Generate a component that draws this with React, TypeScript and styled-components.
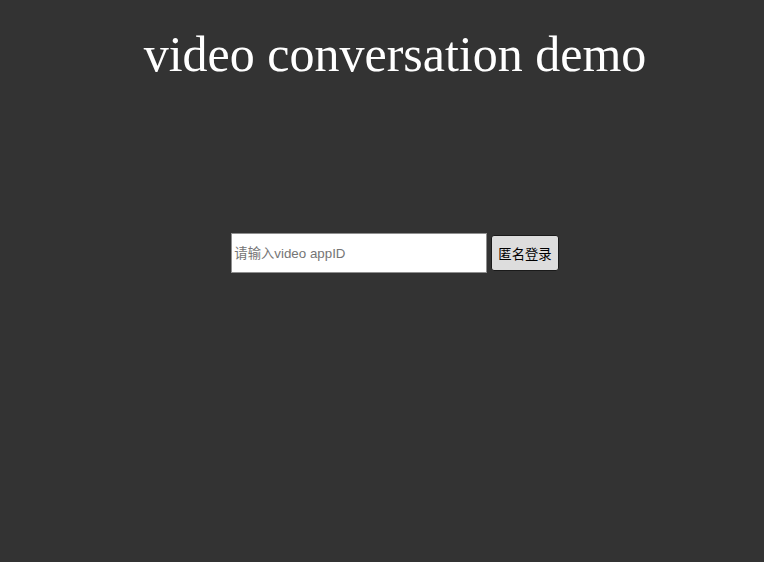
import React from "react";
import styled, { createGlobalStyle } from "styled-components";

const Global = createGlobalStyle`
  html, body { margin: 0; padding: 0; background: #333333; }
  body { min-height: 562px; font-family: "Liberation Serif", "Noto Sans CJK SC", serif; }
`;

const Page = styled.div`
  display: flex;
  flex-direction: column;
  align-items: center;
  padding-left: 26px;
  min-height: 562px;
  box-sizing: border-box;
`;

const Title = styled.h1`
  margin: 25px 0 0;
  font-family: "Liberation Serif", serif;
  font-weight: normal;
  font-size: 50px;
  line-height: 58px;
  color: #ffffff;
`;

const LoginRow = styled.div`
  display: flex;
  align-items: center;
  gap: 4px;
  margin-top: 150px;
`;

const AppIdInput = styled.input`
  box-sizing: border-box;
  width: 256px;
  height: 40px;
  padding: 0 2px;
  border: 1px solid #8f8f8f;
  background: #ffffff;
  font-family: "Liberation Sans", "Noto Sans CJK SC", sans-serif;
  font-size: 13.33px;
  color: #000;
  outline: none;
  &::placeholder { color: #757575; }
`;

const LoginButton = styled.button`
  box-sizing: border-box;
  height: 36px;
  padding: 0 6px;
  border: 1px solid #1a1a1a;
  border-radius: 3px;
  background: #dddddd;
  font-family: "Liberation Sans", "Noto Sans CJK SC", sans-serif;
  font-size: 13.33px;
  color: #000;
`;

export default function App() {
  return (
    <>
      <Global />
      <Page>
        <Title>video conversation demo</Title>
        <LoginRow>
          <AppIdInput placeholder="请输入video appID" />
          <LoginButton>匿名登录</LoginButton>
        </LoginRow>
      </Page>
    </>
  );
}
